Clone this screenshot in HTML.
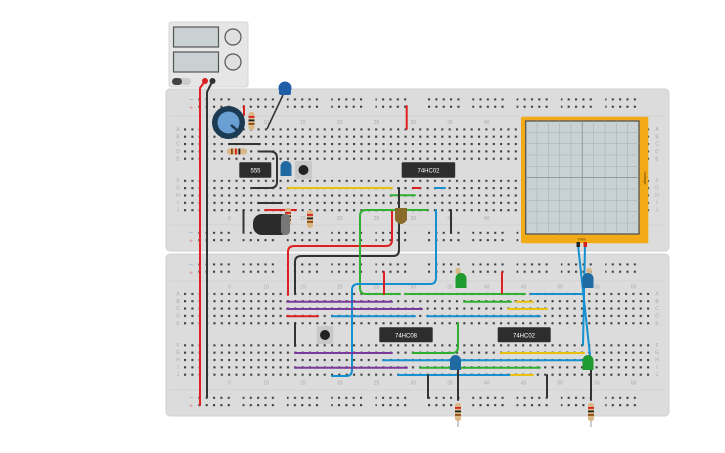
<!DOCTYPE html>
<html><head><meta charset="utf-8"><style>
html,body{margin:0;padding:0;background:#fff;width:725px;height:453px;overflow:hidden}
svg{display:block}
text{font-family:"Liberation Sans",sans-serif}
</style></head><body>
<svg width="725" height="453" viewBox="0 0 725 453" xmlns="http://www.w3.org/2000/svg">
<defs>
<pattern id="hd" x="184" y="128.3" width="7.35" height="7.35" patternUnits="userSpaceOnUse"><rect x="0" y="0" width="2.1" height="2.1" fill="#3c3c3c"/></pattern>
<pattern id="rl" x="198.3" y="98.3" width="7.35" height="7.4" patternUnits="userSpaceOnUse"><rect x="0" y="0" width="2.1" height="2.1" fill="#3c3c3c"/></pattern>
<g id="railrow">
<rect x="198.3" y="98.3" width="33" height="10" fill="url(#rl)"/>
<rect x="242.6" y="98.3" width="33" height="10" fill="url(#rl)"/>
<rect x="286.9" y="98.3" width="33" height="10" fill="url(#rl)"/>
<rect x="331.2" y="98.3" width="33" height="10" fill="url(#rl)"/>
<rect x="375.5" y="98.3" width="33" height="10" fill="url(#rl)"/>
</g>
<g id="rv"><rect x="-3" y="0" width="6" height="18" rx="2.5" fill="#d9b787"/><rect x="-3" y="4" width="6" height="1.8" fill="#d42020"/><rect x="-3" y="7.5" width="6" height="1.8" fill="#222"/><rect x="-3" y="11" width="6" height="1.8" fill="#8a4a10"/></g>
<g id="ledb"><rect x="-5.5" y="0" width="11" height="15" rx="5.5" fill="#1f6aa0"/><rect x="-5.5" y="8" width="11" height="7" fill="#1f6aa0"/></g>
<g id="ledg"><rect x="-5.5" y="0" width="11" height="15" rx="5.5" fill="#1f9a30"/><rect x="-5.5" y="8" width="11" height="7" fill="#1f9a30"/></g>
<g id="rowlbl">
<text x="178" y="131">A</text><text x="178" y="138.4">B</text><text x="178" y="145.7">C</text><text x="178" y="153">D</text><text x="178" y="160.4">E</text>
<text x="178" y="182.4">F</text><text x="178" y="189.7">G</text><text x="178" y="197">H</text><text x="178" y="204.4">I</text><text x="178" y="211.7">J</text>
</g>
<g id="nums">
<text x="229.5" y="124">5</text><text x="266.2" y="124">10</text><text x="303" y="124">15</text><text x="339.7" y="124">20</text><text x="376.5" y="124">25</text><text x="413.2" y="124">30</text><text x="450" y="124">35</text><text x="486.7" y="124">40</text><text x="523.5" y="124">45</text><text x="560.2" y="124">50</text><text x="597" y="124">55</text><text x="633.7" y="124">60</text>
</g>
</defs>

<!-- boards -->
<rect x="166" y="89" width="503" height="162" rx="4" fill="#dcdcdc" stroke="#d0d0d0"/>
<rect x="166" y="254" width="503" height="162" rx="4" fill="#dcdcdc" stroke="#d0d0d0"/>
<g stroke="#cfcfcf" stroke-width="0.8">
<line x1="170" y1="116" x2="665" y2="116"/><line x1="170" y1="225" x2="665" y2="225"/>
<line x1="170" y1="281" x2="665" y2="281"/><line x1="170" y1="390" x2="665" y2="390"/>
</g>

<!-- main holes -->
<rect x="184" y="128.3" width="467" height="33" fill="url(#hd)"/>
<rect x="184" y="179.7" width="467" height="33" fill="url(#hd)"/>
<g transform="translate(0,164.5)">
<rect x="184" y="128.3" width="467" height="33" fill="url(#hd)"/>
<rect x="184" y="179.7" width="467" height="33" fill="url(#hd)"/>
</g>
<!-- rails -->
<use href="#railrow"/>
<use href="#railrow" transform="translate(229.7,0)"/>
<use href="#railrow" transform="translate(0,133.4)"/>
<use href="#railrow" transform="translate(229.7,133.4)"/>
<use href="#railrow" transform="translate(0,165)"/>
<use href="#railrow" transform="translate(229.7,165)"/>
<use href="#railrow" transform="translate(0,298.4)"/>
<use href="#railrow" transform="translate(229.7,298.4)"/>

<!-- labels -->
<g font-size="5" fill="#aaa" text-anchor="middle">
<use href="#rowlbl"/>
<use href="#rowlbl" transform="translate(479,0)"/>
<use href="#rowlbl" transform="translate(0,164.5)"/>
<use href="#rowlbl" transform="translate(479,164.5)"/>
<use href="#nums"/>
<use href="#nums" transform="translate(0,96)"/>
<use href="#nums" transform="translate(0,164.5)"/>
<use href="#nums" transform="translate(0,260.5)"/>
</g>
<g font-size="7" text-anchor="middle">
<text x="191" y="102" fill="#7aa0c8">−</text><text x="191" y="110" fill="#e08080">+</text>
<text x="191" y="235" fill="#7aa0c8">−</text><text x="191" y="243" fill="#e08080">+</text>
<text x="191" y="267" fill="#7aa0c8">−</text><text x="191" y="275" fill="#e08080">+</text>
<text x="191" y="400" fill="#7aa0c8">−</text><text x="191" y="408" fill="#e08080">+</text>
</g>

<!-- power supply -->
<rect x="169" y="22" width="79" height="65" rx="2" fill="#e6e6e6" stroke="#d6d6d6"/>
<rect x="173.5" y="27" width="45" height="20" fill="#c9d1d2" stroke="#555" stroke-width="1.2"/>
<rect x="173.5" y="52" width="45" height="20" fill="#c9d1d2" stroke="#555" stroke-width="1.2"/>
<circle cx="233" cy="37" r="8" fill="#e0e0e0" stroke="#555" stroke-width="1.2"/>
<circle cx="233" cy="62" r="8" fill="#e0e0e0" stroke="#555" stroke-width="1.2"/>
<rect x="172" y="78" width="19" height="7" rx="3.5" fill="#ccc"/>
<rect x="172" y="78" width="10" height="7" rx="3.5" fill="#444"/>
<circle cx="205" cy="81" r="3" fill="#d42020"/><circle cx="212.5" cy="81" r="3" fill="#333"/>

<!-- wires -->
<g fill="none" stroke-width="2" stroke-linecap="round" stroke-linejoin="round">
<path d="M205 81 L200 88 V405" stroke="#e02020"/>
<path d="M212.5 81 L207 92 V397" stroke="#333"/>
<path d="M244 106 V115" stroke="#e02020"/>
<path d="M229 144 H260" stroke="#333"/>
<path d="M260 151.5 H270 Q277 151.5 277 158 V182 Q277 188 270 188 H252" stroke="#333"/>
<path d="M288 188 H392" stroke="#e8c010"/>
<path d="M413 188 H420" stroke="#e02020"/>
<path d="M435 188 H445" stroke="#1590d0"/>
<path d="M391 195.3 H415" stroke="#30b030"/>
<path d="M406.7 106 V129" stroke="#e02020"/>
<path d="M258 203 H282" stroke="#333"/>
<path d="M265 210 H296" stroke="#e02020"/>
<path d="M243.5 210 V232" stroke="#333"/>
<path d="M451 210 V233" stroke="#333"/>
<path d="M399 188 V250 Q399 256 393 256 H301 Q295 256 295 262 V294" stroke="#333"/>
<path d="M392 210 V240 Q392 246 386 246 H294 Q288 246 288 252 V295" stroke="#e02020"/>
<path d="M427 210 H366 Q360 210 360 216 V288 Q360 294 366 294 H400" stroke="#30b030"/>
<path d="M405 294 H525" stroke="#30b030"/>
<path d="M436 210 V278 Q436 284 430 284 H358 Q352 284 352 290 V370 Q352 376 346 376 H332" stroke="#1590d0"/>
<path d="M384 272 V294" stroke="#e02020"/>
<path d="M502 272 V293" stroke="#e02020"/>
<path d="M287 301.7 H392" stroke="#7a3a9a"/>
<path d="M287 309 H422" stroke="#7a3a9a"/>
<path d="M287 316.3 H318" stroke="#e02020"/>
<path d="M332 316.3 H415" stroke="#1590d0"/>
<path d="M427 316.3 H540" stroke="#1590d0"/>
<path d="M464 301.7 H511" stroke="#30b030"/>
<path d="M516 301.7 H533" stroke="#e8c010"/>
<path d="M508 309 H547" stroke="#e8c010"/>
<path d="M531 294 H583" stroke="#1590d0"/>
<path d="M295 323 V346" stroke="#333"/>
<path d="M295 353 H392" stroke="#7a3a9a"/>
<path d="M413 353 H452 Q458 353 458 347 V323" stroke="#30b030"/>
<path d="M501 353 H584" stroke="#e8c010"/>
<path d="M383 360.3 H588" stroke="#1590d0"/>
<path d="M295 367.7 H407" stroke="#7a3a9a"/>
<path d="M420 367.7 H540" stroke="#30b030"/>
<path d="M398 375 H510" stroke="#1590d0"/>
<path d="M511 375 H533" stroke="#e8c010"/>
<path d="M428 375 V398" stroke="#333"/>
<path d="M547 375 V397" stroke="#333"/>
<path d="M458 370 V400" stroke="#333"/>
<path d="M591 370 V400" stroke="#333"/>
<path d="M578 245 L590 355" stroke="#1590d0"/>
<path d="M585 245 L583 345" stroke="#1590d0"/>
</g>

<!-- pot -->
<circle cx="228.5" cy="122.5" r="16.5" fill="#1c3a52"/>
<circle cx="228.5" cy="122.5" r="11" fill="#6a9fd4"/>
<line x1="231" y1="125" x2="238" y2="131" stroke="#1c3a52" stroke-width="2.5"/>

<!-- resistors -->
<use href="#rv" transform="translate(251.5,112)"/>
<use href="#rv" transform="translate(288,208)"/>
<use href="#rv" transform="translate(310,210)"/>
<use href="#rv" transform="translate(458,403)"/>
<use href="#rv" transform="translate(591,403)"/>
<line x1="458" y1="421" x2="458" y2="427" stroke="#999"/><line x1="591" y1="421" x2="591" y2="427" stroke="#999"/>
<rect x="227" y="148.5" width="20" height="6" rx="2.5" fill="#d9b787"/><rect x="231" y="148.5" width="1.8" height="6" fill="#8a4a10"/><rect x="235" y="148.5" width="1.8" height="6" fill="#d42020"/><rect x="238.5" y="148.5" width="1.8" height="6" fill="#222"/>
<rect x="455.5" y="268" width="5" height="6" rx="2" fill="#d9b787"/>
<rect x="586.5" y="268" width="5" height="6" rx="2" fill="#d9b787"/>

<!-- ceramic cap -->
<line x1="283" y1="95" x2="267" y2="129" stroke="#333" stroke-width="1.6"/>
<circle cx="285" cy="88" r="6.5" fill="#1f5fa8"/>
<rect x="279" y="88" width="12" height="7" rx="2" fill="#1f5fa8"/>

<!-- chips -->
<g font-size="6" fill="#fff" text-anchor="middle">
<rect x="239.3" y="162.3" width="32" height="15.4" rx="1" fill="#2d2d2d"/><text x="255.5" y="172.5">555</text>
<rect x="401.7" y="162.3" width="53.5" height="15.4" rx="1" fill="#2d2d2d"/><text x="428.5" y="172.5">74HC02</text>
<rect x="379.3" y="327.3" width="53.4" height="15" rx="1" fill="#2d2d2d"/><text x="406" y="337.3">74HC08</text>
<rect x="497.7" y="327.3" width="53" height="15" rx="1" fill="#2d2d2d"/><text x="524" y="337.3">74HC02</text>
</g>

<!-- buttons -->
<rect x="295" y="161" width="17" height="18" rx="1.5" fill="#c8c8c8"/><circle cx="303.5" cy="170" r="5" fill="#222"/>
<rect x="316.7" y="326" width="16.6" height="18" rx="1.5" fill="#c8c8c8"/><circle cx="325" cy="335" r="5" fill="#222"/>

<!-- LEDs -->
<use href="#ledb" transform="translate(286,161)"/>
<use href="#ledb" transform="translate(455.5,355)"/>
<use href="#ledb" transform="translate(588,273)"/>
<use href="#ledg" transform="translate(461,273)"/>
<use href="#ledg" transform="translate(588,355)"/>

<!-- electrolytic cap -->
<rect x="253" y="214" width="37" height="21" rx="9" fill="#2b2b2b"/>
<rect x="281" y="214" width="9" height="21" rx="4" fill="#777"/>

<!-- trimmer -->
<path d="M395 208 H407 V220 Q401 228 395 220 Z" fill="#8a6a2a"/>

<!-- oscilloscope -->
<rect x="521" y="116.7" width="127.3" height="126.6" rx="2" fill="#f2aa16"/>
<rect x="525.7" y="121" width="113.3" height="113" fill="#c8d1d4" stroke="#555" stroke-width="1.3"/>
<g stroke="#a9b5b8" stroke-width="0.6">
<line x1="537" y1="121" x2="537" y2="234"/><line x1="548.3" y1="121" x2="548.3" y2="234"/><line x1="559.6" y1="121" x2="559.6" y2="234"/><line x1="571" y1="121" x2="571" y2="234"/><line x1="593.6" y1="121" x2="593.6" y2="234"/><line x1="605" y1="121" x2="605" y2="234"/><line x1="616.3" y1="121" x2="616.3" y2="234"/><line x1="627.6" y1="121" x2="627.6" y2="234"/>
<line x1="525.7" y1="132.3" x2="639" y2="132.3"/><line x1="525.7" y1="143.6" x2="639" y2="143.6"/><line x1="525.7" y1="155" x2="639" y2="155"/><line x1="525.7" y1="166.3" x2="639" y2="166.3"/><line x1="525.7" y1="189" x2="639" y2="189"/><line x1="525.7" y1="200.3" x2="639" y2="200.3"/><line x1="525.7" y1="211.6" x2="639" y2="211.6"/><line x1="525.7" y1="223" x2="639" y2="223"/>
</g>
<g stroke="#8a9699" stroke-width="0.9"><line x1="582.3" y1="121" x2="582.3" y2="234"/><line x1="525.7" y1="177.6" x2="639" y2="177.6"/></g>
<text x="582" y="240.5" font-size="4" fill="#5a3a00" text-anchor="middle">Time</text>
<text x="644" y="178" font-size="4" fill="#5a3a00" text-anchor="middle" transform="rotate(90 644 178)">Voltage</text>
<rect x="576.5" y="242" width="3.5" height="5" fill="#222"/><rect x="583.5" y="242" width="3.5" height="5" fill="#d42020"/>
</svg>
</body></html>
